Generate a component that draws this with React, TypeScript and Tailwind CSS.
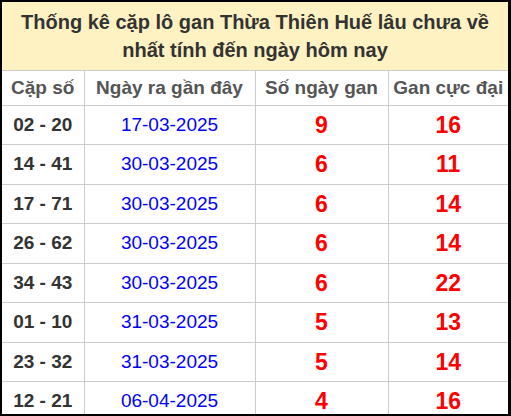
const rows = [
  { pair: "02 - 20", date: "17-03-2025", days: 9, max: 16 },
  { pair: "14 - 41", date: "30-03-2025", days: 6, max: 11 },
  { pair: "17 - 71", date: "30-03-2025", days: 6, max: 14 },
  { pair: "26 - 62", date: "30-03-2025", days: 6, max: 14 },
  { pair: "34 - 43", date: "30-03-2025", days: 6, max: 22 },
  { pair: "01 - 10", date: "31-03-2025", days: 5, max: 13 },
  { pair: "23 - 32", date: "31-03-2025", days: 5, max: 14 },
  { pair: "12 - 21", date: "06-04-2025", days: 4, max: 16 },
];

export default function App() {
  return (
    <div className="h-[416px] w-[511px] overflow-hidden border-y-2 border-l-2 border-r-[3px] border-black bg-white font-['Liberation_Sans',Arial,sans-serif]">
      <div className="bg-[#fff2c2] px-2 py-[6px] text-center text-[20px] leading-[28px] font-bold text-[#333]">
        Thống kê cặp lô gan Thừa Thiên Huế lâu chưa về
        <br />
        nhất tính đến ngày hôm nay
      </div>
      <table className="w-full table-fixed border-collapse">
        <colgroup>
          <col className="w-[82px]" />
          <col className="w-[171px]" />
          <col className="w-[133px]" />
          <col />
        </colgroup>
        <thead>
          <tr className="h-[35px] text-[19px] font-bold text-[#555]">
            <th className="border-t border-r border-[#ccc] font-bold">Cặp số</th>
            <th className="border-t border-x border-[#ccc] font-bold">Ngày ra gần đây</th>
            <th className="border-t border-x border-[#ccc] font-bold">Số ngày gan</th>
            <th className="border-t border-l border-[#ccc] font-bold">Gan cực đại</th>
          </tr>
        </thead>
        <tbody>
          {rows.map((r) => (
            <tr key={r.pair} className="h-[39.45px] text-center">
              <td className="border-t border-r border-[#ccc] text-[19px] font-bold text-[#333]">{r.pair}</td>
              <td className="border border-[#ccc] text-[19px] text-[#0000ff]">{r.date}</td>
              <td className="border border-[#ccc] text-[23px] font-bold text-[#ff0000]">{r.days}</td>
              <td className="border-t border-l border-[#ccc] text-[23px] font-bold text-[#ff0000]">{r.max}</td>
            </tr>
          ))}
        </tbody>
      </table>
    </div>
  );
}
